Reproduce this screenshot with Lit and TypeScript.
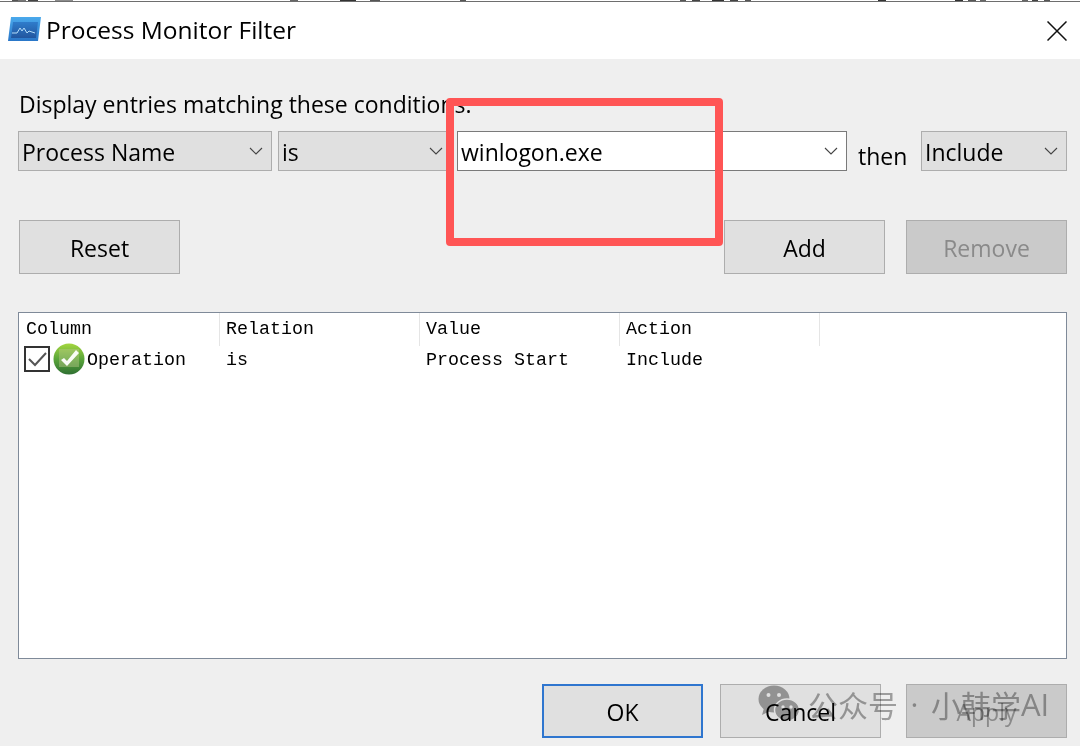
import { LitElement, html, css, svg } from "lit";
import { customElement } from "lit/decorators.js";

const chevron = html`<svg class="chev" width="14" height="8" viewBox="0 0 14 8"><path d="M1 1l6 6 6-6" fill="none" stroke="#444" stroke-width="1.1"/></svg>`;

const fragments: [number, number, string][] = [
  [12, 10, "#555"], [18, 8, "#777"], [28, 10, "#444"], [55, 18, "#8c8c8c"],
  [290, 8, "#666"], [340, 16, "#333"], [370, 10, "#555"], [460, 6, "#555"],
  [680, 6, "#555"], [692, 8, "#444"], [712, 12, "#333"], [730, 8, "#444"], [745, 6, "#555"],
  [878, 8, "#333"], [955, 8, "#333"], [968, 8, "#555"], [980, 6, "#666"], [1022, 6, "#666"], [1032, 6, "#444"], [1044, 6, "#555"],
];

@customElement("app-root")
export class AppRoot extends LitElement {
  static styles = css`
    :host { display: block; width: 1080px; height: 746px; position: relative; overflow: hidden; background: #efefef; font-family: "Open Sans", "Noto Sans", sans-serif; font-size: 23px; color: #000; }
    .topline { height: 2px; display: block; background: #fff; }
    .title { height: 57px; background: #fff; display: flex; align-items: center; padding: 0 13px 2px 8px; box-sizing: border-box; }
    .title .logo { margin-right: 5px; }
    .title .name { flex: 1; font-size: 24.5px; }
    .closex { margin-top: 2px; }
    .main { padding: 32px 13px 0 18px; display: flex; flex-direction: column; }
    .label { height: 40px; line-height: 26px; padding-left: 1px; white-space: nowrap; }
    .row { display: flex; height: 40px; }
    .sel { box-sizing: border-box; height: 40px; background: #e0e0e0; border: 1px solid #adadad; display: flex; align-items: center; justify-content: space-between; padding: 0 8px 0 3px; }
    .sel span { padding-top: 2px; }
    .sel1 { width: 254px; margin-right: 6px; }
    .sel2 { width: 174px; margin-right: 5px; }
    .combo { width: 390px; background: #fff; border-color: #7a7a7a; margin-right: 11px; }
    .then { width: 63px; padding-top: 5px; line-height: 40px; box-sizing: border-box; }
    .sel3 { width: 146px; }
    .btn { box-sizing: border-box; width: 161px; height: 54px; padding-top: 1px; background: #e0e0e0; border: 1px solid #adadad; display: flex; align-items: center; justify-content: center; }
    .btn.dis { background: #cacaca; color: #8a8a8a; }
    .btn.def { border: 2px solid #2f76cf; }
    .btns { display: flex; margin-top: 49px; padding-left: 1px; }
    .spacer { flex: 1; }
    .gap21 { width: 21px; }
    .gap17 { width: 17px; }
    .gap25 { width: 25px; }
    .list { margin-top: 38px; box-sizing: border-box; height: 347px; width: 1049px; background: #fff; border: 1px solid #7f8a99; font-family: "Liberation Mono", monospace; font-size: 18.33px; }
    .head, .item { display: grid; grid-template-columns: 201px 200px 200px 200px; }
    .head { height: 29px; }
    .hc { border-right: 1px solid #e5e5e5; padding-left: 7px; box-sizing: border-box; line-height: 33px; }
    .hc + .hc { padding-left: 6px; }
    .item { height: 34px; align-items: center; }
    .c0 { display: flex; align-items: center; padding-left: 5px; }
    .cell { padding-left: 6px; padding-top: 2px; }
    .box { width: 26px; height: 26px; box-sizing: border-box; border: 2px solid #333; margin-right: 3px; display: flex; }
    .op { margin-left: 2px; padding-top: 2px; }
    .foot { display: flex; margin-top: 25px; justify-content: flex-end; }
    .red { position: absolute; left: 446px; top: 98px; width: 277px; height: 148px; box-sizing: border-box; border: 8px solid #ff5555; border-radius: 4px; }
    .wm { position: absolute; left: 758px; top: 684px; display: flex; align-items: center; color: #a8a8a8; mix-blend-mode: multiply; font-family: "Noto Sans CJK SC", sans-serif; font-size: 30px; font-weight: 400; white-space: nowrap; line-height: 40px; }
    .wm svg { margin-right: 8px; }
    .wm .dot { width: 33px; text-align: center; font-family: "Open Sans", sans-serif; }
    .wm .ai { font-family: "Open Sans", sans-serif; font-weight: 400; font-size: 31px; }
    .chev { flex: none; }
  `;

  render() {
    return html`
      <svg class="topline" width="1080" height="2" viewBox="0 0 1080 2">
        <rect x="0" y="1" width="1080" height="1" fill="#6e6e6e"/>
        ${fragments.map(([x, w, c]) => svg`<rect x=${x} y="0" width=${w} height="1" fill=${c}/>`)}
      </svg>
      <div class="title">
        <svg class="logo" width="33" height="25" viewBox="0 0 33 25">
          <defs><linearGradient id="lg" x1="0" y1="0" x2="0" y2="1"><stop offset="0" stop-color="#4aa9ec"/><stop offset="1" stop-color="#2a76c8"/></linearGradient>
          <linearGradient id="lg2" x1="0" y1="0" x2="0" y2="1"><stop offset="0" stop-color="#2f7ccb"/><stop offset="1" stop-color="#22569f"/></linearGradient></defs>
          <path d="M3 0h30l-3 24H0z" fill="url(#lg)"/>
          <path d="M5 5h25l-2 16H3z" fill="url(#lg2)"/>
          <path d="M4 16h5l3-5 2 3 2-3 3 5 2-2 6 2" fill="none" stroke="#b4dcf8" stroke-width="1"/>
        </svg>
        <div class="name">Process Monitor Filter</div>
        <svg class="closex" width="20" height="20" viewBox="0 0 20 20"><path d="M.5.5l19 19M19.500.5l-19 19" stroke="#111" stroke-width="1.500"/></svg>
      </div>
      <div class="main">
        <div class="label">Display entries matching these conditions.</div>
        <div class="row">
          <div class="sel sel1"><span>Process Name</span>${chevron}</div>
          <div class="sel sel2"><span>is</span>${chevron}</div>
          <div class="sel combo"><span>winlogon.exe</span>${chevron}</div>
          <div class="then">then</div>
          <div class="sel sel3"><span>Include</span>${chevron}</div>
        </div>
        <div class="btns">
          <div class="btn">Reset</div>
          <div class="spacer"></div>
          <div class="btn">Add</div>
          <div class="gap21"></div>
          <div class="btn dis">Remove</div>
        </div>
        <div class="list">
          <div class="head">
            <div class="hc">Column</div><div class="hc">Relation</div><div class="hc">Value</div><div class="hc">Action</div>
          </div>
          <div class="item">
            <div class="c0">
              <div class="box"><svg width="22" height="22" viewBox="0 0 22 22"><path d="M3 11l6 6 11-12" fill="none" stroke="#555" stroke-width="2"/></svg></div>
              <svg width="32" height="34" viewBox="0 0 32 34">
                <defs><linearGradient id="gg" x1="0" y1="0" x2="0" y2="1"><stop offset="0" stop-color="#a4d63f"/><stop offset=".5" stop-color="#5aa63a"/><stop offset="1" stop-color="#2f7033"/></linearGradient></defs>
                <circle cx="16" cy="17" r="15.500" fill="url(#gg)"/>
                <rect x="6" y="7" width="20" height="18" fill="#b7c78a" opacity=".45"/>
                <path d="M8 18l6 6L26 11l-3-3-9 11-3-3z" fill="#fff" opacity=".95"/>
              </svg>
              <span class="op">Operation</span>
            </div>
            <div class="cell">is</div><div class="cell">Process Start</div><div class="cell">Include</div>
          </div>
        </div>
        <div class="foot">
          <div class="btn def">OK</div>
          <div class="gap17"></div>
          <div class="btn">Cancel</div>
          <div class="gap25"></div>
          <div class="btn dis">Apply</div>
        </div>
      </div>
      <div class="red"></div>
      <div class="wm">
        <svg width="42" height="38" viewBox="0 0 42 38">
          <ellipse cx="16" cy="14" rx="15.500" ry="13.500" fill="#a6a6a6"/>
          <path d="M6 23l-2 7 8-4z" fill="#a6a6a6"/>
          <ellipse cx="29" cy="25" rx="12.500" ry="11" fill="#a6a6a6" stroke="#fff" stroke-width="1.500"/>
          <circle cx="10.500" cy="10" r="2" fill="#fff"/><circle cx="21" cy="10" r="2" fill="#fff"/>
          <circle cx="25" cy="22" r="1.700" fill="#fff"/><circle cx="33" cy="22" r="1.700" fill="#fff"/>
        </svg>
        <span>公众号</span><span class="dot">·</span><span>小韩学</span><span class="ai">AI</span>
      </div>
    `;
  }
}
